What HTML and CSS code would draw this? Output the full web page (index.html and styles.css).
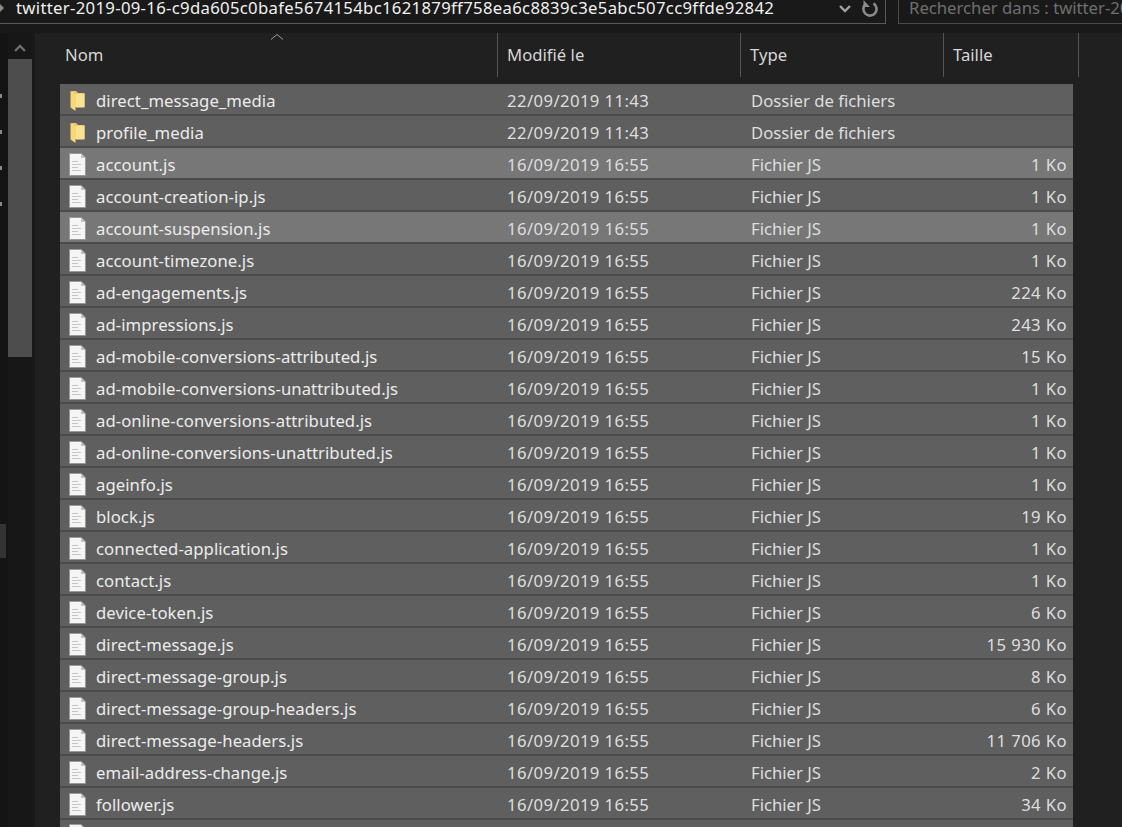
FILE: index.html
```html
<!DOCTYPE html>
<html lang="fr">
<head>
  <meta charset="UTF-8">
  <title>twitter-2019-09-16</title>
  <link rel="stylesheet" href="styles.css">
</head>
<body>

  <svg class="defs" width="0" height="0">
    <symbol id="folder" viewBox="0 0 15 21">
      <path d="M1 1h5l2 2h6.500v14H5z" fill="#f0c868"/>
      <path d="M5.500 4h9v13.500h-9z" fill="#fde28f"/>
      <path d="M.5 1l5 3v17l-5-3.500z" fill="#f7d67c"/>
    </symbol>
    <symbol id="file" viewBox="0 0 17 23">
      <path d="M.5.500h11.500l4.500 4.500v17.500H.5z" fill="#f5f5f5" stroke="#9a9a9a"/>
      <path d="M12 .5v4.500h4.500z" fill="#c4c4c4"/>
      <path d="M3 8.500h6M3 11.500h9M3 14.500h6M3 17.500h9" stroke="#c6c6c6" stroke-width="1.200"/>
    </symbol>
  </svg>

  <div class="topbar">
    <div class="path">
      <span class="path-arrow"></span>
      <span class="path-text">twitter-2019-09-16-c9da605c0bafe5674154bc1621879ff758ea6c8839c3e5abc507cc9ffde92842</span>
      <svg class="chevron" width="14" height="9" viewBox="0 0 14 9"><path d="M2 2l5 5 5-5" fill="none" stroke="#a0a0a0" stroke-width="2.400"/></svg>
      <svg class="refresh" width="18" height="18" viewBox="0 0 18 18"><path d="M12.500 3.400A6.600 6.600 0 1 1 4.400 4.200" fill="none" stroke="#8a8a8a" stroke-width="2.600"/><path d="M2.500 0v7h6.500z" fill="#8a8a8a"/></svg>
    </div>
    <div class="search">Rechercher dans : twitter-20</div>
  </div>

  <div class="main">
    <div class="nav">
      <div class="edge">
        <span class="dot"></span>
        <span class="dot"></span>
        <span class="dot"></span>
        <span class="dot"></span>
        <span class="strip"></span>
      </div>
      <div class="scroll">
        <svg class="scroll-up" width="12" height="8" viewBox="0 0 12 8"><path d="M1 7l5-5 5 5" fill="none" stroke="#6e6e6e" stroke-width="2.400"/></svg>
        <div class="thumb"></div>
      </div>
    </div>

    <div class="pane">
      <svg class="sort" width="14" height="7" viewBox="0 0 14 7"><path d="M1 6.500l6-5 6 5" fill="none" stroke="#9a9a9a"/></svg>
      <div class="head">
        <div class="hcell">Nom</div>
        <div class="hcell">Modifié le</div>
        <div class="hcell">Type</div>
        <div class="hcell">Taille</div>
      </div>

      <div class="list">
        <div class="row"><div class="name"><svg class="ico-folder"><use href="#folder"/></svg>direct_message_media</div><div class="num">22/09/2019 11:43</div><div>Dossier de fichiers</div><div class="size num"></div></div>
        <div class="row"><div class="name"><svg class="ico-folder"><use href="#folder"/></svg>profile_media</div><div class="num">22/09/2019 11:43</div><div>Dossier de fichiers</div><div class="size num"></div></div>
        <div class="row sel"><div class="name"><svg class="ico-file"><use href="#file"/></svg>account.js</div><div class="num">16/09/2019 16:55</div><div>Fichier JS</div><div class="size num">1 Ko</div></div>
        <div class="row"><div class="name"><svg class="ico-file"><use href="#file"/></svg>account-creation-ip.js</div><div class="num">16/09/2019 16:55</div><div>Fichier JS</div><div class="size num">1 Ko</div></div>
        <div class="row sel"><div class="name"><svg class="ico-file"><use href="#file"/></svg>account-suspension.js</div><div class="num">16/09/2019 16:55</div><div>Fichier JS</div><div class="size num">1 Ko</div></div>
        <div class="row"><div class="name"><svg class="ico-file"><use href="#file"/></svg>account-timezone.js</div><div class="num">16/09/2019 16:55</div><div>Fichier JS</div><div class="size num">1 Ko</div></div>
        <div class="row"><div class="name"><svg class="ico-file"><use href="#file"/></svg>ad-engagements.js</div><div class="num">16/09/2019 16:55</div><div>Fichier JS</div><div class="size num">224 Ko</div></div>
        <div class="row"><div class="name"><svg class="ico-file"><use href="#file"/></svg>ad-impressions.js</div><div class="num">16/09/2019 16:55</div><div>Fichier JS</div><div class="size num">243 Ko</div></div>
        <div class="row"><div class="name"><svg class="ico-file"><use href="#file"/></svg>ad-mobile-conversions-attributed.js</div><div class="num">16/09/2019 16:55</div><div>Fichier JS</div><div class="size num">15 Ko</div></div>
        <div class="row"><div class="name"><svg class="ico-file"><use href="#file"/></svg>ad-mobile-conversions-unattributed.js</div><div class="num">16/09/2019 16:55</div><div>Fichier JS</div><div class="size num">1 Ko</div></div>
        <div class="row"><div class="name"><svg class="ico-file"><use href="#file"/></svg>ad-online-conversions-attributed.js</div><div class="num">16/09/2019 16:55</div><div>Fichier JS</div><div class="size num">1 Ko</div></div>
        <div class="row"><div class="name"><svg class="ico-file"><use href="#file"/></svg>ad-online-conversions-unattributed.js</div><div class="num">16/09/2019 16:55</div><div>Fichier JS</div><div class="size num">1 Ko</div></div>
        <div class="row"><div class="name"><svg class="ico-file"><use href="#file"/></svg>ageinfo.js</div><div class="num">16/09/2019 16:55</div><div>Fichier JS</div><div class="size num">1 Ko</div></div>
        <div class="row"><div class="name"><svg class="ico-file"><use href="#file"/></svg>block.js</div><div class="num">16/09/2019 16:55</div><div>Fichier JS</div><div class="size num">19 Ko</div></div>
        <div class="row"><div class="name"><svg class="ico-file"><use href="#file"/></svg>connected-application.js</div><div class="num">16/09/2019 16:55</div><div>Fichier JS</div><div class="size num">1 Ko</div></div>
        <div class="row"><div class="name"><svg class="ico-file"><use href="#file"/></svg>contact.js</div><div class="num">16/09/2019 16:55</div><div>Fichier JS</div><div class="size num">1 Ko</div></div>
        <div class="row"><div class="name"><svg class="ico-file"><use href="#file"/></svg>device-token.js</div><div class="num">16/09/2019 16:55</div><div>Fichier JS</div><div class="size num">6 Ko</div></div>
        <div class="row"><div class="name"><svg class="ico-file"><use href="#file"/></svg>direct-message.js</div><div class="num">16/09/2019 16:55</div><div>Fichier JS</div><div class="size num">15 930 Ko</div></div>
        <div class="row"><div class="name"><svg class="ico-file"><use href="#file"/></svg>direct-message-group.js</div><div class="num">16/09/2019 16:55</div><div>Fichier JS</div><div class="size num">8 Ko</div></div>
        <div class="row"><div class="name"><svg class="ico-file"><use href="#file"/></svg>direct-message-group-headers.js</div><div class="num">16/09/2019 16:55</div><div>Fichier JS</div><div class="size num">6 Ko</div></div>
        <div class="row"><div class="name"><svg class="ico-file"><use href="#file"/></svg>direct-message-headers.js</div><div class="num">16/09/2019 16:55</div><div>Fichier JS</div><div class="size num">11 706 Ko</div></div>
        <div class="row"><div class="name"><svg class="ico-file"><use href="#file"/></svg>email-address-change.js</div><div class="num">16/09/2019 16:55</div><div>Fichier JS</div><div class="size num">2 Ko</div></div>
        <div class="row"><div class="name"><svg class="ico-file"><use href="#file"/></svg>follower.js</div><div class="num">16/09/2019 16:55</div><div>Fichier JS</div><div class="size num">34 Ko</div></div>
        <div class="row"><div class="name"><svg class="ico-file"><use href="#file"/></svg></div></div>
      </div>
    </div>
  </div>

</body>
</html>
```

FILE: styles.css
```css
html, body {
  margin: 0;
  height: 827px;
  overflow: hidden;
}

body {
  font-family: "Noto Sans", sans-serif;
  font-size: 16.7px;
  background-color: #191919;
  color: #e4e4e4;
  display: flex;
  flex-direction: column;
}

.defs {
  display: block;
  height: 0;
}

/* top bar */
.topbar {
  display: flex;
  flex: none;
  height: 24px;
  margin-bottom: 9px;
}

.path {
  width: 886px;
  flex: none;
  display: flex;
  align-items: flex-start;
  border-right: 1px solid #5a5a5a;
  border-bottom: 1px solid #5a5a5a;
  box-sizing: border-box;
}

.path-arrow {
  width: 0;
  height: 0;
  margin-top: 4px;
  border-left: 4px solid #8a8a8a;
  border-top: 4px solid transparent;
  border-bottom: 4px solid transparent;
}

.path-text {
  margin-left: 12px;
  width: 810px;
  flex: none;
  line-height: 16px;
  letter-spacing: 0.32px;
  color: #f0f0f0;
  white-space: nowrap;
}

.chevron {
  margin-top: 4px;
  margin-left: 12px;
}

.refresh {
  margin-left: 9px;
}

.search {
  margin-left: 12px;
  flex: 1;
  min-width: 0;
  white-space: nowrap;
  padding-left: 10px;
  line-height: 16px;
  color: #6f6f6f;
  border-left: 1px solid #4a4a4a;
  border-bottom: 1px solid #4a4a4a;
}

/* left side */
.main {
  flex: 1;
  display: flex;
  min-height: 0;
}

.nav {
  width: 35px;
  flex: none;
  display: flex;
}

.edge {
  width: 8px;
  flex: none;
  display: flex;
  flex-direction: column;
  align-items: flex-start;
  padding-top: 61px;
  box-sizing: border-box;
  background-color: #141414;
}

.dot {
  width: 2px;
  height: 4px;
  margin-bottom: 32px;
  background-color: #8a8a8a;
}

.strip {
  width: 6px;
  height: 34px;
  margin-top: 286px;
  background-color: #333;
}

.scroll {
  width: 24px;
  flex: none;
  display: flex;
  flex-direction: column;
  align-items: center;
  background-color: #171717;
}

.scroll-up {
  margin-top: 11px;
  margin-bottom: 7px;
}

.thumb {
  width: 24px;
  height: 298px;
  background-color: #4d4d4d;
}

/* file list */
.pane {
  flex: 1;
  min-width: 0;
  background-color: #202020;
  padding-left: 25px;
  position: relative;
}

.sort {
  position: absolute;
  left: 235px;
  top: 0;
}

.head {
  display: grid;
  grid-template-columns: 438px 243px 203px 135px;
  height: 41px;
  margin-bottom: 10px;
}

.hcell {
  padding-left: 9px;
  line-height: 44px;
  color: #d6d6d6;
  border-right: 1px solid #555;
  box-sizing: border-box;
}

.hcell:first-child {
  padding-left: 5px;
}

.list {
  width: 1013px;
}

.row {
  display: grid;
  grid-template-columns: 447px 244px 203px 113px;
  height: 32px;
  line-height: 33px;
  box-sizing: border-box;
  padding-right: 6px;
  background-color: #5f5f5f;
  border-bottom: 2px solid #4c4c4c;
  color: #dedede;
  white-space: nowrap;
}

.row.sel {
  background-color: #777;
}

.name {
  display: flex;
  align-items: center;
  letter-spacing: 0.06px;
  color: #ececec;
}

.num {
  letter-spacing: 0.4px;
}

.ico-folder {
  width: 15px;
  height: 21px;
  margin-left: 10px;
  margin-right: 11px;
}

.ico-file {
  width: 17px;
  height: 23px;
  margin-left: 9px;
  margin-right: 10px;
}

.size {
  text-align: right;
}
```
